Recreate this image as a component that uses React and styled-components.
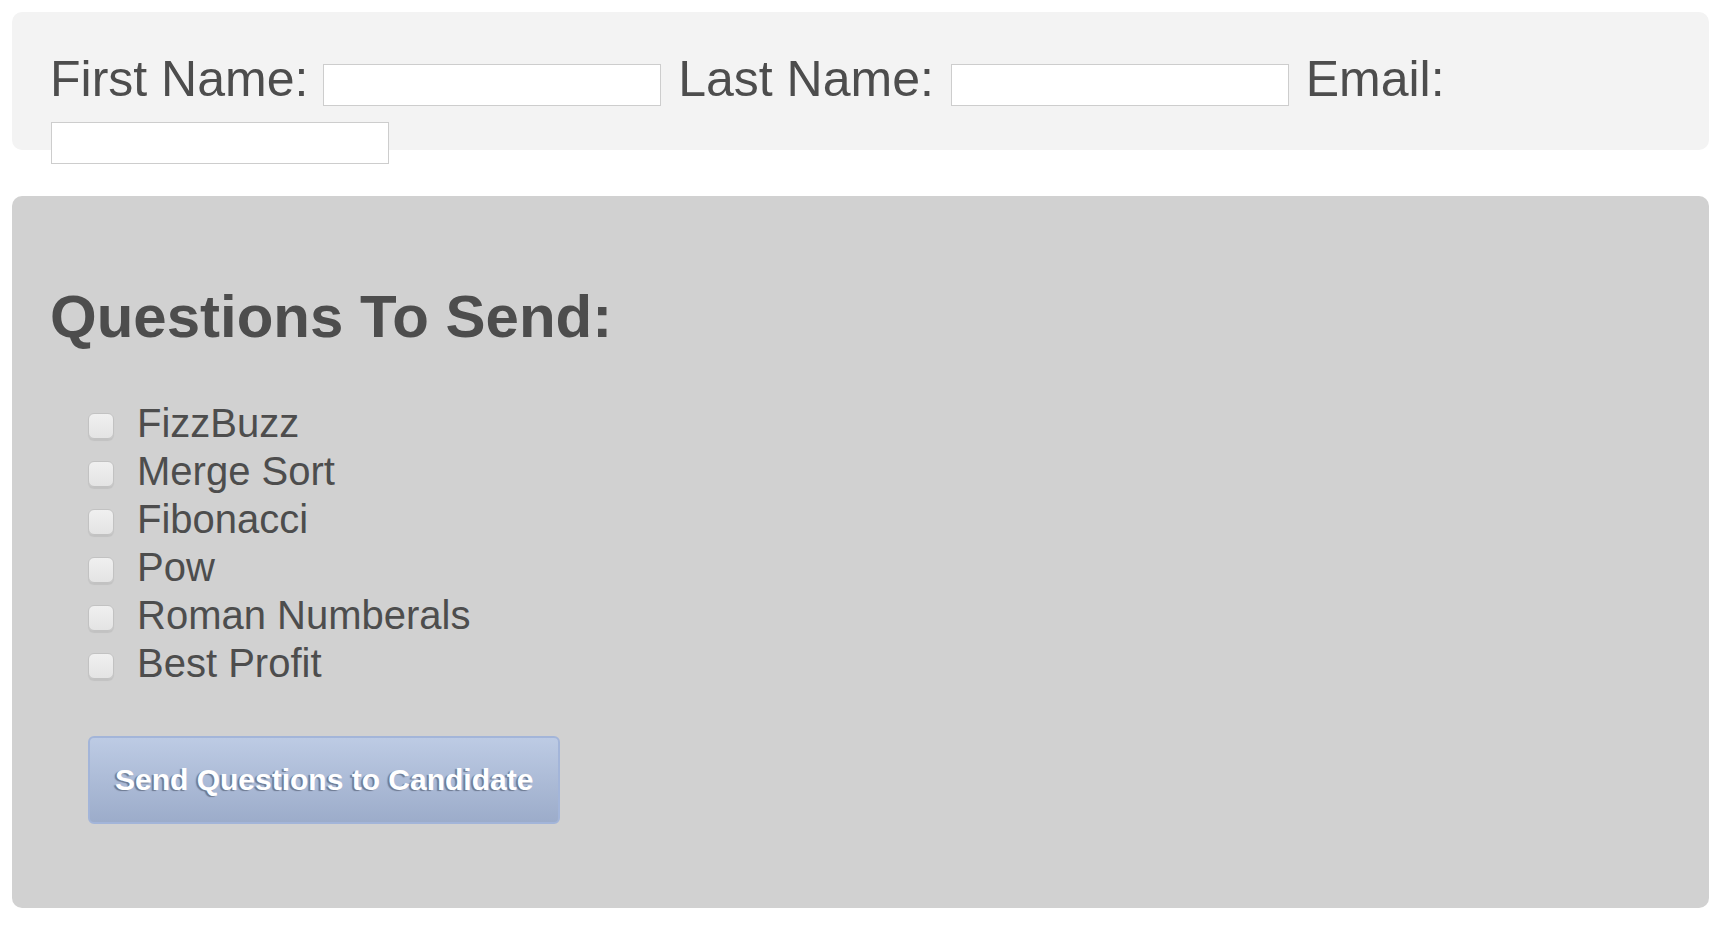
import React from 'react';
import styled, { createGlobalStyle } from 'styled-components';

const GlobalStyle = createGlobalStyle`
   html, body {
      margin: 0;
      padding: 0;
      background: #fff;
   }
   body {
      padding: 12px 21px 12px 12px;
      font-family: 'Liberation Sans', Helvetica, Arial, sans-serif;
      color: #4d4d4d;
   }
`;

const InfoBar = styled.div`
   box-sizing: border-box;
   height: 138px;
   padding: 38px 36px 0 38px;
   background: #f3f3f3;
   border-radius: 10px;
   font-size: 50px;
   line-height: normal;
`;

const TextInput = styled.input`
   box-sizing: border-box;
   width: 338px;
   height: 42px;
   margin: 0 3px 2px;
   padding: 0 6px;
   vertical-align: bottom;
   border: 1px solid #cdcdcd;
   background: #fff;
   font-size: 24px;
   font-family: inherit;
   &:first-of-type,
   &:last-of-type {
      margin-left: 1px;
   }
   &:focus {
      outline: none;
   }
`;

const QuestionPanel = styled.div`
   margin-top: 46px;
   padding: 86px 36px 84px 38px;
   background: #d1d1d1;
   border-radius: 10px;
`;

const Heading = styled.h1`
   margin: 0 0 48px;
   font-size: 60px;
   font-weight: bold;
   line-height: normal;
   color: #4d4d4d;
`;

const Form = styled.form`
   padding-left: 38px;
`;

const QuestionList = styled.div`
   margin-bottom: 49px;
`;

const Row = styled.label`
   display: block;
   font-size: 40px;
   line-height: 48px;
   white-space: nowrap;
`;

const Box = styled.input`
   appearance: none;
   -webkit-appearance: none;
   box-sizing: border-box;
   width: 26px;
   height: 26px;
   margin: 0 23px 0 0;
   vertical-align: -2px;
   border: 1px solid #c2c2c2;
   border-radius: 6px;
   background: linear-gradient(#f0f0f0, #e4e4e4);
   box-shadow: 0 2px 1px rgba(0, 0, 0, 0.07);
   &:checked {
      background: linear-gradient(#9fb3d8, #7f95bf);
   }
`;

const SendButton = styled.button`
   box-sizing: border-box;
   height: 88px;
   padding: 0 25px;
   border: 2px solid #a3b5d9;
   border-radius: 6px;
   background: linear-gradient(#bdcbe4, #9cacca);
   font-family: inherit;
   font-size: 30px;
   font-weight: bold;
   color: #fff;
   text-shadow: -2px 1px 1px rgba(70, 80, 100, 0.6);
   cursor: pointer;
   &:focus {
      outline: none;
   }
`;

const questions = [
   'FizzBuzz',
   'Merge Sort',
   'Fibonacci',
   'Pow',
   'Roman Numberals',
   'Best Profit',
];

const App = () => (
   <>
      <GlobalStyle />
      <InfoBar>
         First Name:{' '}
         <TextInput type="text" />
         {' '}Last Name:{' '}
         <TextInput type="text" />
         {' '}Email:{' '}
         <TextInput type="text" />
      </InfoBar>
      <QuestionPanel>
         <Heading>Questions To Send:</Heading>
         <Form onSubmit={e => e.preventDefault()}>
            <QuestionList>
               {questions.map(q => (
                  <Row key={q}>
                     <Box type="checkbox" />
                     {q}
                  </Row>
               ))}
            </QuestionList>
            <SendButton type="submit">Send Questions to Candidate</SendButton>
         </Form>
      </QuestionPanel>
   </>
);

export default App;
